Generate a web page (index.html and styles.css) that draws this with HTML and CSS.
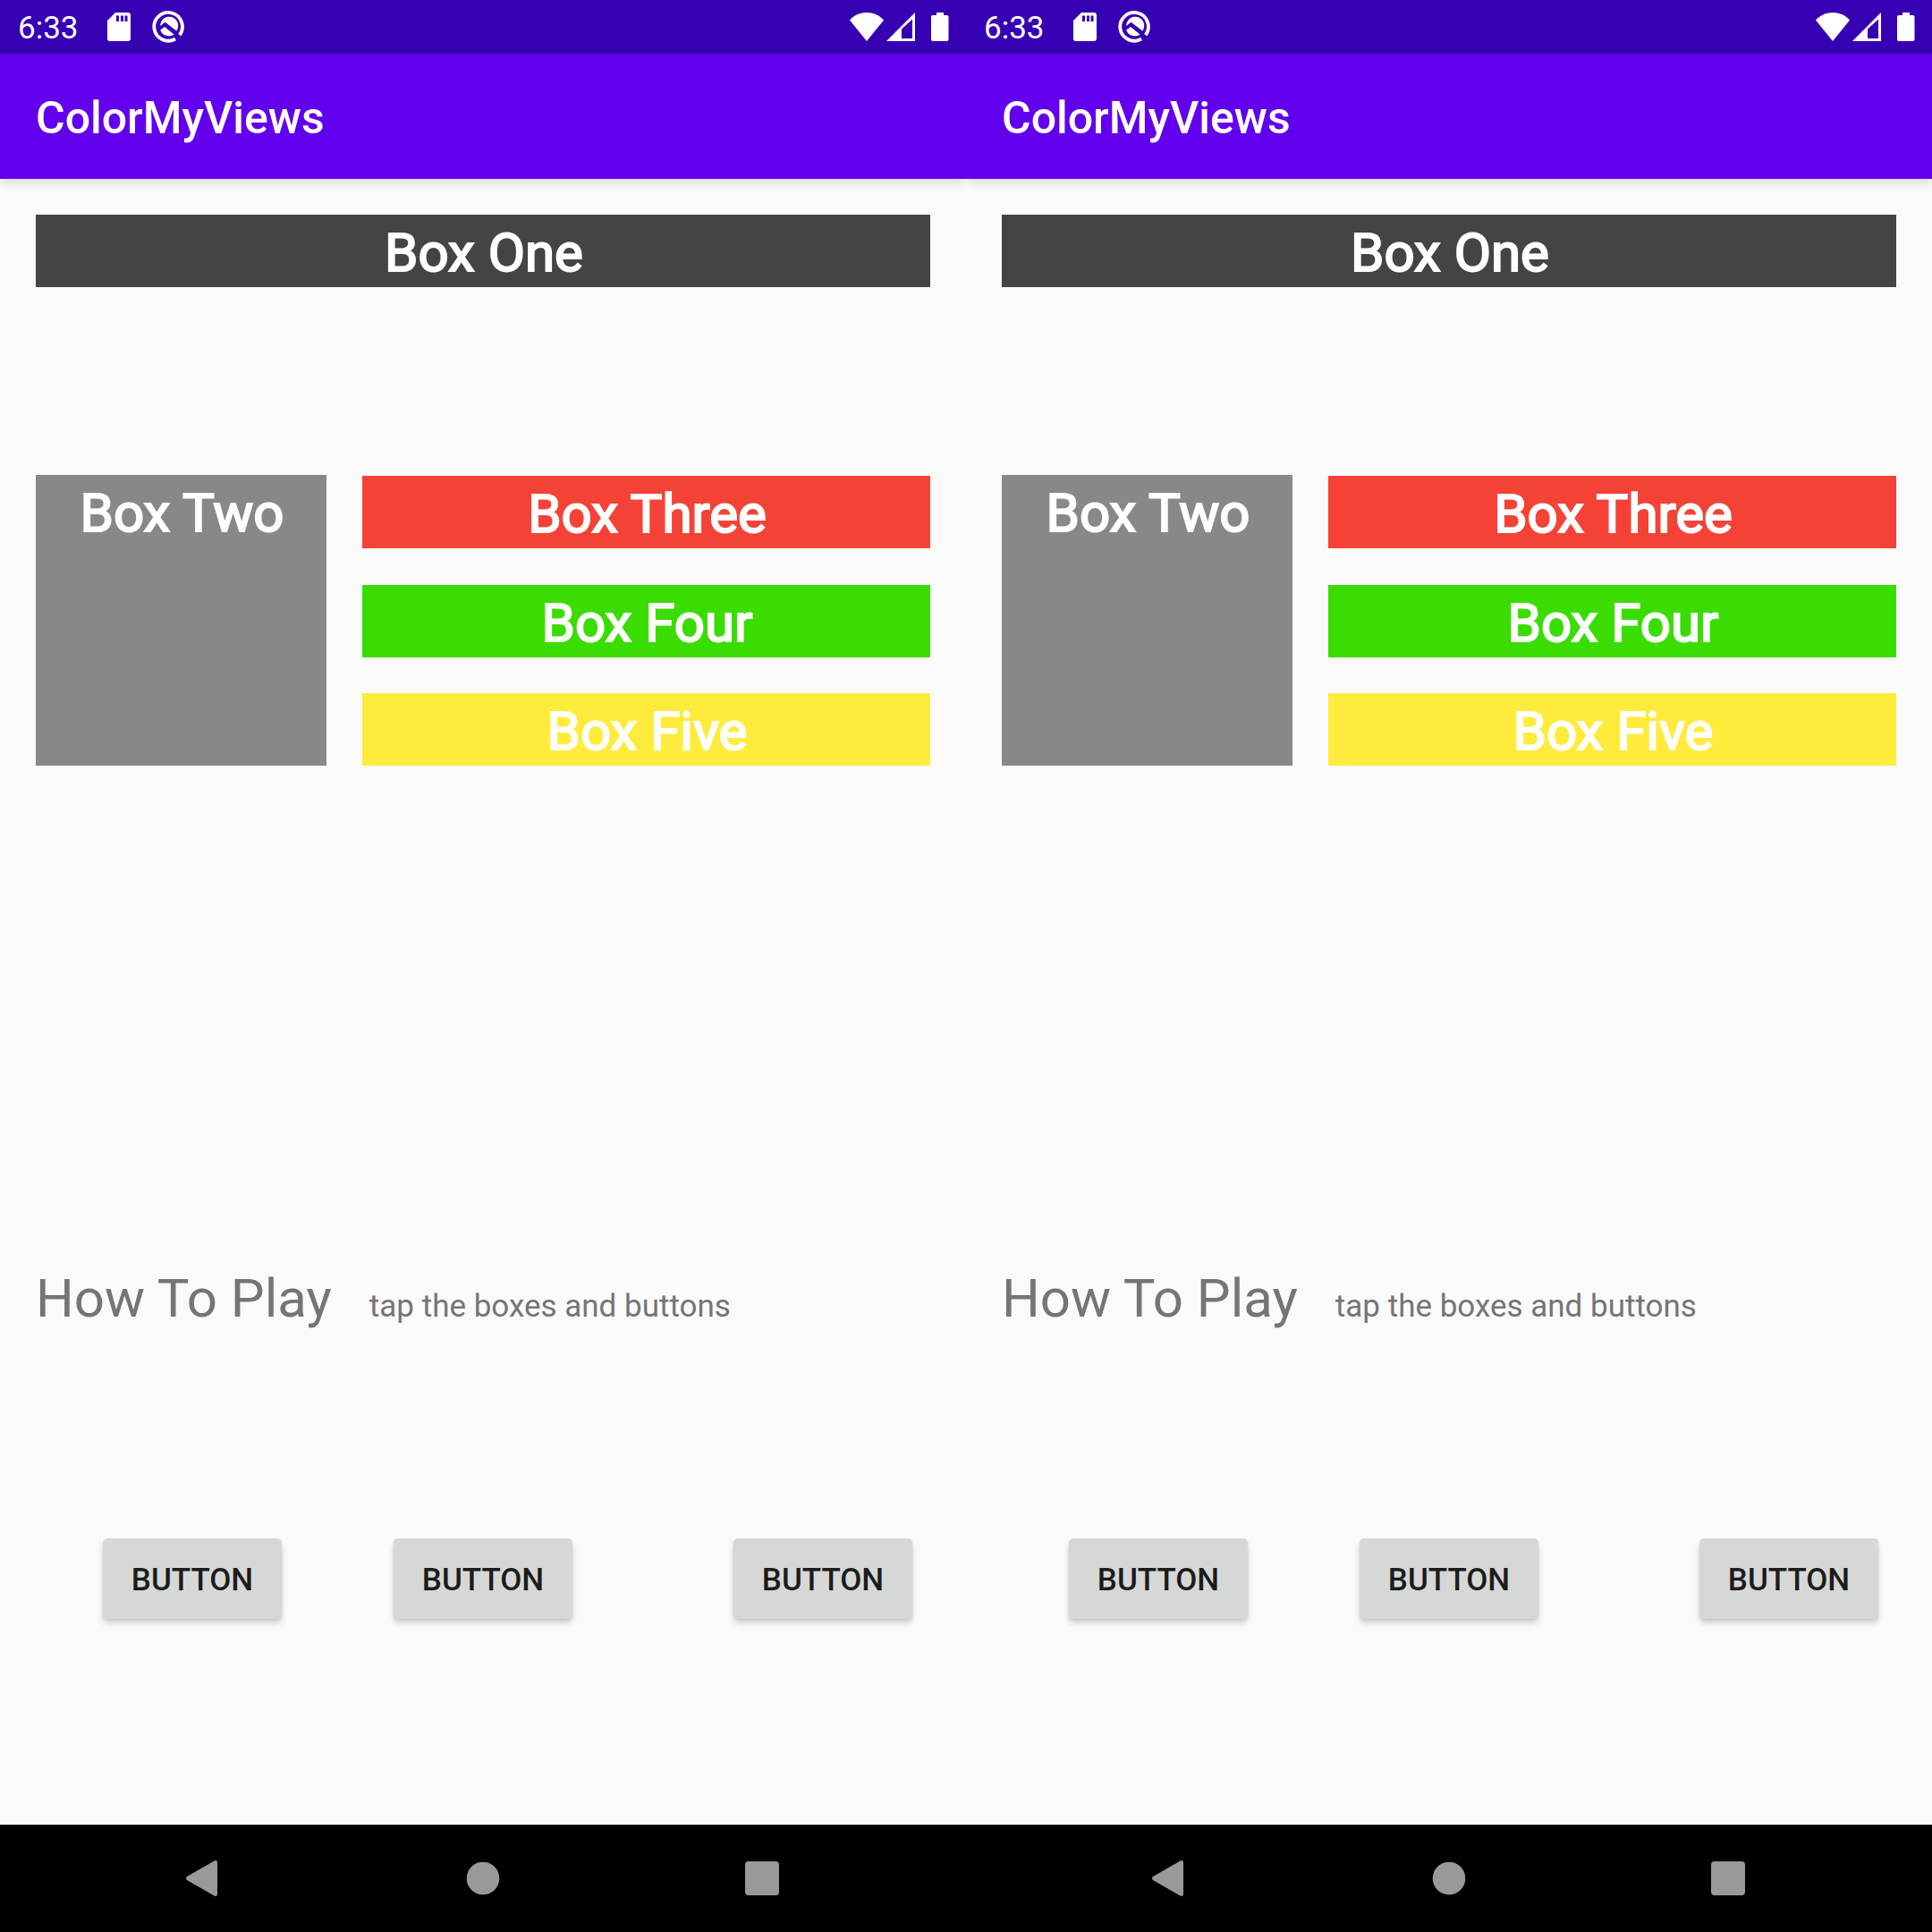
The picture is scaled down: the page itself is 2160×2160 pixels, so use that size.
FILE: index.html
```html
<!DOCTYPE html>
<html lang="en">
<head>
<meta charset="utf-8">
<meta name="viewport" content="width=device-width, initial-scale=1">
<title>ColorMyViews</title>
<link rel="stylesheet" href="styles.css">
</head>
<body>
<svg class="sprite" aria-hidden="true">
  <symbol id="sd" viewBox="0 0 26 32"><path fill-rule="evenodd" d="M9 0H23a3 3 0 0 1 3 3V29a3 3 0 0 1-3 3H3a3 3 0 0 1-3-3V9ZM10 3.500V10H13V3.500ZM15 3.500V10H18V3.500ZM19.500 3.500V10H22.500V3.500Z"/></symbol>
  <symbol id="q" viewBox="0 0 36 36"><path d="M26 31.500A15.800 15.800 0 1 1 30.800 27.200" fill="none" stroke="currentColor" stroke-width="3.800"/><path d="M9.200 17A10 10 0 1 1 27.300 22.500L14.500 12.800Z"/><path d="M9.200 21.500L14 18L24.500 26.500A10 10 0 0 1 9.200 21.500Z"/></symbol>
  <symbol id="wifi" viewBox="0 0 38 32"><path d="M19 32L0 8.500C10-2.800 28-2.800 38 8.500Z"/></symbol>
  <symbol id="signal" viewBox="0 0 32 32"><path fill-rule="evenodd" d="M0 32L32 0V32ZM17 18.500V29H29V7.500Z"/></symbol>
  <symbol id="battery" viewBox="0 0 20 32"><path d="M6 0H14V3H17.500A2 2 0 0 1 19.500 5V30A2 2 0 0 1 17.500 32H2A2 2 0 0 1 0 30V5A2 2 0 0 1 2 3H6Z"/></symbol>
  <symbol id="back" viewBox="0 0 60 60"><path d="M11 28L41.500 10.500Q45 9 45 12.500V47.500Q45 51 41.500 49.500L11 32Q9 30 11 28Z"/></symbol>
  <symbol id="home" viewBox="0 0 60 60"><circle cx="30" cy="30" r="18.300"/></symbol>
  <symbol id="recents" viewBox="0 0 60 60"><rect x="11" y="11" width="38" height="38" rx="4"/></symbol>
</svg>
<div class="screens">
  <section class="phone">
    <div class="status">
      <span class="clock">6:33</span>
      <svg class="icon-sd"><use href="#sd"/></svg>
      <svg class="icon-q"><use href="#q"/></svg>
      <div class="status-end">
        <svg class="icon-wifi"><use href="#wifi"/></svg>
        <svg class="icon-signal"><use href="#signal"/></svg>
        <svg class="icon-battery"><use href="#battery"/></svg>
      </div>
    </div>
    <header class="appbar"><h1 class="title">ColorMyViews</h1></header>
    <main class="content">
      <div class="box box-one">Box One</div>
      <div class="box-group">
        <div class="box box-two">Box Two</div>
        <div class="box-stack">
          <div class="box box-three">Box Three</div>
          <div class="box box-four">Box Four</div>
          <div class="box box-five">Box Five</div>
        </div>
      </div>
      <div class="help">
        <h2 class="help-title">How To Play</h2>
        <p class="help-text">tap the boxes and buttons</p>
      </div>
      <div class="actions">
        <button class="btn btn-first" type="button">BUTTON</button>
        <button class="btn btn-second" type="button">BUTTON</button>
        <button class="btn btn-third" type="button">BUTTON</button>
      </div>
    </main>
    <nav class="navbar">
      <button class="nav-btn" type="button" aria-label="Back"><svg class="nav-icon"><use href="#back"/></svg></button>
      <button class="nav-btn" type="button" aria-label="Home"><svg class="nav-icon"><use href="#home"/></svg></button>
      <button class="nav-btn" type="button" aria-label="Recent apps"><svg class="nav-icon"><use href="#recents"/></svg></button>
    </nav>
  </section>
  <section class="phone">
    <div class="status">
      <span class="clock">6:33</span>
      <svg class="icon-sd"><use href="#sd"/></svg>
      <svg class="icon-q"><use href="#q"/></svg>
      <div class="status-end">
        <svg class="icon-wifi"><use href="#wifi"/></svg>
        <svg class="icon-signal"><use href="#signal"/></svg>
        <svg class="icon-battery"><use href="#battery"/></svg>
      </div>
    </div>
    <header class="appbar"><h1 class="title">ColorMyViews</h1></header>
    <main class="content">
      <div class="box box-one">Box One</div>
      <div class="box-group">
        <div class="box box-two">Box Two</div>
        <div class="box-stack">
          <div class="box box-three">Box Three</div>
          <div class="box box-four">Box Four</div>
          <div class="box box-five">Box Five</div>
        </div>
      </div>
      <div class="help">
        <h2 class="help-title">How To Play</h2>
        <p class="help-text">tap the boxes and buttons</p>
      </div>
      <div class="actions">
        <button class="btn btn-first" type="button">BUTTON</button>
        <button class="btn btn-second" type="button">BUTTON</button>
        <button class="btn btn-third" type="button">BUTTON</button>
      </div>
    </main>
    <nav class="navbar">
      <button class="nav-btn" type="button" aria-label="Back"><svg class="nav-icon"><use href="#back"/></svg></button>
      <button class="nav-btn" type="button" aria-label="Home"><svg class="nav-icon"><use href="#home"/></svg></button>
      <button class="nav-btn" type="button" aria-label="Recent apps"><svg class="nav-icon"><use href="#recents"/></svg></button>
    </nav>
  </section>
</div>
</body>
</html>
```
FILE: styles.css
```css
* { box-sizing: border-box; }
body {
  margin: 0;
  background: #fafafa;
  font-family: Roboto, "Liberation Sans", sans-serif;
}
svg { display: block; fill: currentColor; }
.sprite { position: absolute; width: 0; height: 0; }

.screens {
  display: grid;
  grid-template-columns: 1fr 1fr;
  min-height: 100vh;
}
.phone { display: flex; flex-direction: column; overflow: hidden; }

/* status bar */
.status {
  display: flex;
  align-items: center;
  height: 60px;
  padding: 0 19px 0 20px;
  background: #3700b3;
  color: #fff;
}
.clock { width: 100px; font-size: 35px; line-height: 60px; padding-top: 3px; }
.icon-sd { width: 26px; height: 32px; }
.icon-q { width: 36px; height: 36px; margin-left: 24px; }
.status-end { display: flex; align-items: center; margin-left: auto; }
.icon-wifi { width: 38px; height: 32px; }
.icon-signal { width: 32px; height: 32px; margin-left: 3px; }
.icon-battery { width: 20px; height: 32px; margin-left: 18px; }

/* app bar */
.appbar {
  display: flex;
  align-items: center;
  height: 140px;
  padding: 4px 40px 0;
  background: #6200ee;
  color: #fff;
  box-shadow: 0 4px 12px rgba(0, 0, 0, .14);
}
.title { margin: 0; font-size: 50px; line-height: 60px; font-weight: 500; }

/* content: the free height is shared between the rows */
.content {
  flex: 1;
  display: grid;
  grid-template-rows: auto 210fr auto 552fr auto 231fr auto 230fr;
  padding-top: 40px;
}
.box {
  height: 81px;
  padding: 2px 0 0 2px;
  color: #fff;
  font-size: 60px;
  line-height: 81px;
  text-align: center;
  -webkit-text-stroke: 2px #fff;
}
.box-one { margin: 0 40px; background: #444; }
.box-group {
  grid-row: 3;
  display: flex;
  gap: 40px;
  padding: 0 40px;
}
.box-two { width: 325px; height: 325px; background: #888; }
.box-stack {
  flex: 1;
  display: flex;
  flex-direction: column;
  justify-content: space-between;
  padding-top: 1px;
}
.box-three { background: #f44336; }
.box-four { background: #3bdc02; }
.box-five { background: #ffeb3b; }

.help {
  grid-row: 5;
  display: flex;
  align-items: baseline;
  gap: 42px;
  padding: 6px 40px 0;
  color: #757575;
}
.help-title { margin: 0; font-size: 60px; line-height: 75px; font-weight: 400; }
.help-text { margin: 0; font-size: 35px; line-height: 48px; }

.actions {
  grid-row: 7;
  display: grid;
  grid-template-columns: 115fr 200px 125fr 200px 180fr 200px 60fr;
}
.btn {
  height: 90px;
  border: 0;
  border-radius: 5px;
  padding: 3px 0 0;
  background: #d6d8d7;
  color: #1c1c1c;
  font: 500 35px/48px Roboto, "Liberation Sans", sans-serif;
  box-shadow: 0 5px 6px rgba(0, 0, 0, .16), 0 1px 3px rgba(0, 0, 0, .08);
}
.btn-first { grid-column: 2; }
.btn-second { grid-column: 4; }
.btn-third { grid-column: 6; }

/* system navigation */
.navbar {
  display: grid;
  grid-template-columns: repeat(3, 1fr);
  height: 120px;
  padding: 0 72px;
  background: #000;
}
.nav-btn {
  display: flex;
  align-items: center;
  justify-content: center;
  border: 0;
  padding: 0;
  background: none;
  color: #999;
}
.nav-icon { width: 60px; height: 60px; }
```
